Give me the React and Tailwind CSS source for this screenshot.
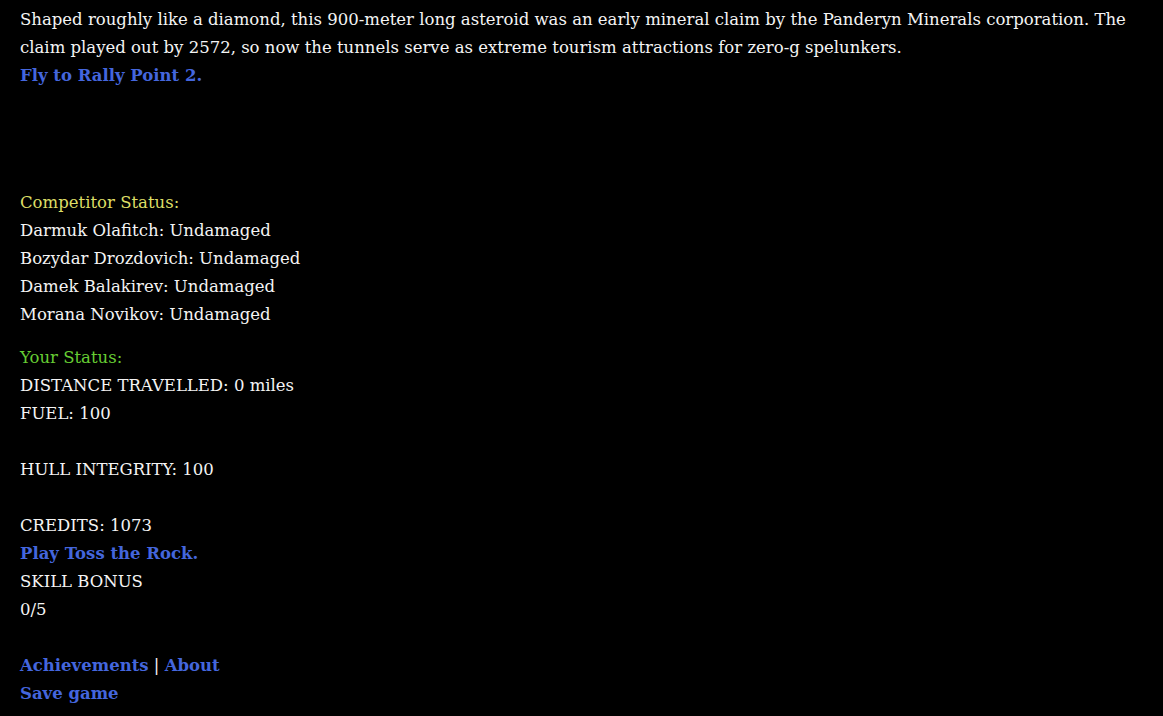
import React from "react";

const serif = { fontFamily: '"DejaVu Serif", "Liberation Serif", serif' };

const competitors = [
	"Darmuk Olafitch",
	"Bozydar Drozdovich",
	"Damek Balakirev",
	"Morana Novikov",
];

const Link = ({ children }) => (
	<a href="#" className="font-bold text-[#4466dd] no-underline">
		{children}
	</a>
);

export default function App() {
	return (
		<div
			className="min-h-screen bg-black text-[#f4f4f4] px-5 pt-[6px] text-[16.5px] leading-[28px]"
			style={serif}
		>
			<p>
				Shaped roughly like a diamond, this 900-meter long asteroid was an early
				mineral claim by the Panderyn Minerals corporation. The claim played out
				by 2572, so now the tunnels serve as extreme tourism attractions for
				zero-g spelunkers.
			</p>
			<div>
				<Link>Fly to Rally Point 2.</Link>
			</div>

			<div className="mt-[99px]">
				<div className="text-[#dddd66]">Competitor Status:</div>
				{competitors.map((name) => (
					<div key={name}>{name}: Undamaged</div>
				))}
			</div>

			<div className="mt-[15px]">
				<div className="text-[#66cc33]">Your Status:</div>
				<div>DISTANCE TRAVELLED: 0 miles</div>
				<div>FUEL: 100</div>
				<div className="mt-[28px]">HULL INTEGRITY: 100</div>
				<div className="mt-[28px]">CREDITS: 1073</div>
				<div>
					<Link>Play Toss the Rock.</Link>
				</div>
				<div>SKILL BONUS</div>
				<div>0/5</div>
			</div>

			<div className="mt-[28px]">
				<div>
					<Link>Achievements</Link> | <Link>About</Link>
				</div>
				<div>
					<Link>Save game</Link>
				</div>
			</div>
		</div>
	);
}
